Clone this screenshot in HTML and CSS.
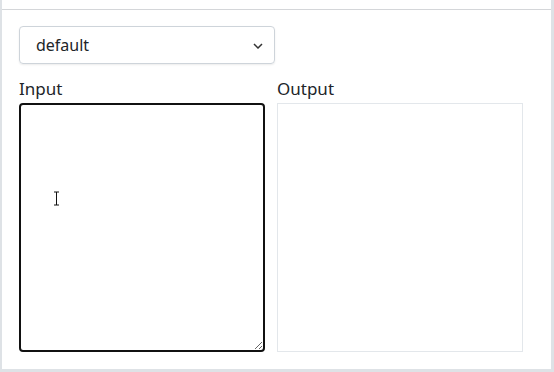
FILE: index.html
```html
<!DOCTYPE html>
<html lang="en">
<head>
  <meta charset="UTF-8" />
  <title>Formatter</title>
  <link rel="stylesheet" href="styles.css">
</head>
<body>
  <div class="panel">
    <div class="topbar"></div>
    <div class="content">
      <div class="select">
        <span>default</span>
        <svg class="chevron" width="10" height="6" viewBox="0 0 10 6">
          <path d="M1 1 L5 5 L9 1" fill="none" stroke="#333" stroke-width="1.5" />
        </svg>
      </div>

      <div class="editors">
        <div class="pane">
          <label for="input">Input</label>
          <div class="input-wrap">
            <textarea id="input"></textarea>
            <svg class="ibeam" width="7" height="15" viewBox="0 0 7 15">
              <path d="M1 1 H6 M3.5 1 V14 M1 14 H6" fill="none" stroke="#fff" stroke-width="2.5" />
              <path d="M1 1 H6 M3.5 1 V14 M1 14 H6" fill="none" stroke="#111" stroke-width="1" />
            </svg>
          </div>
        </div>
        <div class="pane">
          <label>Output</label>
          <div class="output"></div>
        </div>
      </div>
    </div>
  </div>
</body>
</html>
```

FILE: styles.css
```css
html, body {
  height: 100%;
}

body {
  margin: 0;
  background: #dee2e6;
  font-family: 'Noto Sans', 'Open Sans', sans-serif;
  color: #212529;
}

.panel {
  background: #fff;
  margin: 0 3px 0 2px;
  height: 369px;
  box-sizing: border-box;
}

.topbar {
  height: 9px;
  border-bottom: 1px solid #d4d6d9;
}

.content {
  padding: 16px 0 0 17px;
}

.select {
  width: 256px;
  height: 38px;
  box-sizing: border-box;
  border: 1px solid #ced4da;
  border-radius: 4px;
  box-shadow: 0 1px 2px rgba(0, 0, 0, 0.08);
  display: flex;
  align-items: center;
  justify-content: space-between;
  padding: 0 11px 0 16px;
  font-size: 16px;
}

.chevron {
  margin-top: 1px;
}

.editors {
  display: grid;
  grid-template-columns: 246px 246px;
  gap: 12px;
  margin-top: 13px;
}

.pane label {
  display: block;
  font-size: 17px;
  line-height: 24px;
  margin-bottom: 2px;
}

.input-wrap {
  position: relative;
}

textarea {
  display: block;
  width: 246px;
  height: 249px;
  box-sizing: border-box;
  border: 2px solid #111;
  border-radius: 4px;
  outline: none;
  margin: 0;
  font-family: inherit;
}

.ibeam {
  position: absolute;
  left: 34px;
  top: 88px;
}

.output {
  width: 246px;
  height: 249px;
  box-sizing: border-box;
  border: 1px solid #e3e7eb;
}
```
